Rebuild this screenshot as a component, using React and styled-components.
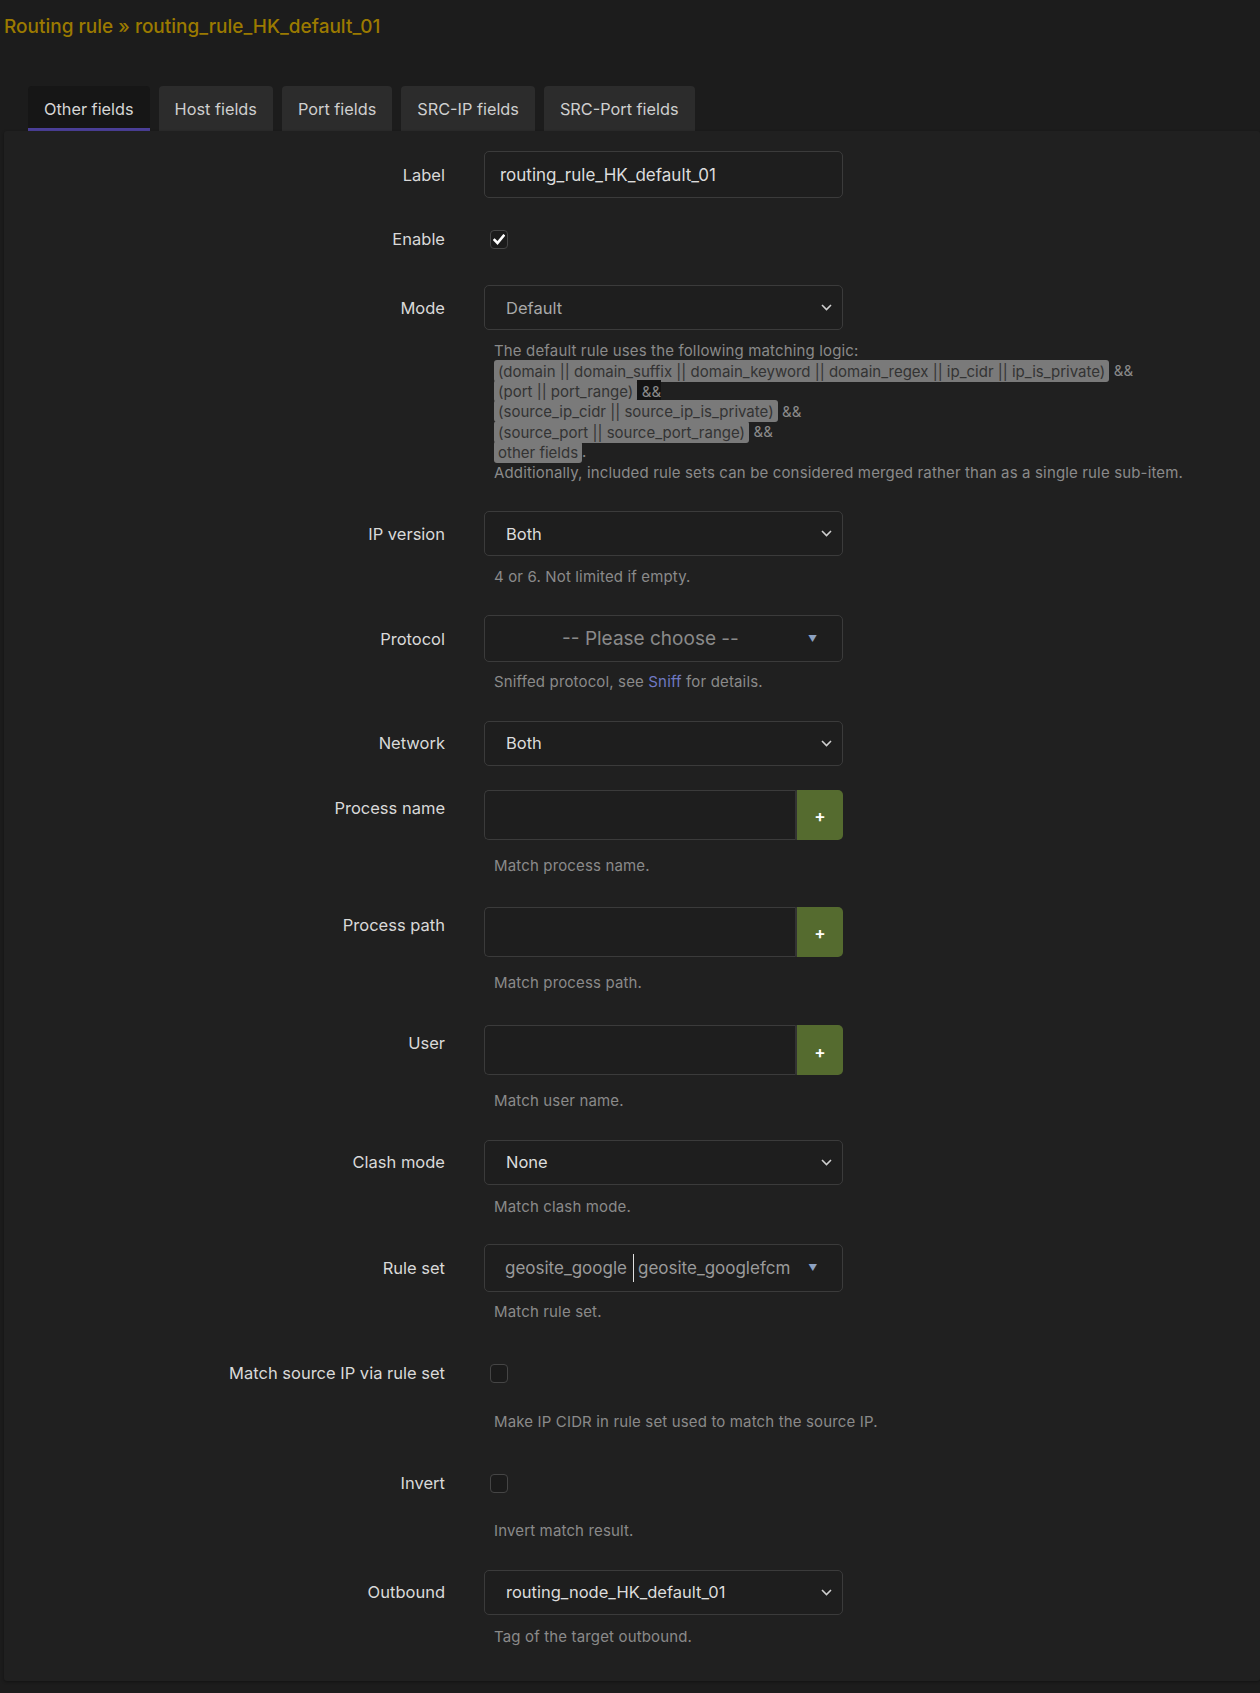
import React from "react";
import styled, { createGlobalStyle } from "styled-components";

const GlobalStyle = createGlobalStyle`
  html, body { margin: 0; padding: 0; background: #1c1c1c; }
  body { font-family: Inter, "Noto Sans", "Liberation Sans", sans-serif; color: #d8d8d8; }
  * { box-sizing: border-box; }
`;

const Page = styled.div`
  width: 1260px;
  min-height: 1693px;
  background: #1c1c1c;
  display: flex;
  flex-direction: column;
`;

const Title = styled.h2`
  margin: 0;
  padding: 15px 0 0 4px;
  height: 86px;
  font-size: 19px;
  line-height: 24px;
  font-weight: 500;
  color: #9b7a00;
`;

const TabBar = styled.div`
  display: flex;
  gap: 9px;
  padding-left: 28px;
  height: 45px;
`;

const Tab = styled.div`
  height: 45px;
  padding: 3px 16px 0;
  display: flex;
  align-items: center;
  font-size: 16.3px;
  color: ${(p) => (p.$active ? "#d6d6d6" : "#cfcfcf")};
  background: ${(p) => (p.$active ? "#161616" : "#2c2c2c")};
  border-radius: 4px 4px 0 0;
  border-bottom: 3px solid ${(p) => (p.$active ? "#4b3f98" : "transparent")};
`;

const Panel = styled.div`
  margin-left: 4px;
  background: #202020;
  border-radius: 3px;
  box-shadow: 0 1px 3px rgba(0, 0, 0, 0.35);
  padding: 20px 0 34px 0;
  display: flex;
  flex-direction: column;
`;

const Row = styled.div`
  display: grid;
  grid-template-columns: 441px 1fr;
  column-gap: 39px;
  align-items: start;
  margin-top: ${(p) => p.$gap || 0}px;
`;

const Label = styled.div`
  height: ${(p) => p.$h}px;
  display: flex;
  align-items: center;
  justify-content: flex-end;
  font-size: 16.5px;
  color: #d9d9d9;
`;

const Field = styled.div`
  display: flex;
  flex-direction: column;
  align-items: flex-start;
`;

const TextInput = styled.div`
  width: 359px;
  height: ${(p) => p.$h}px;
  border: 1px solid #3b3b3b;
  border-radius: 5px;
  background: #1e1e1e;
  padding: 0 15px;
  display: flex;
  align-items: center;
  font-size: 17px;
  color: #dcdcdc;
`;

const SelectBox = styled.div`
  width: 359px;
  height: ${(p) => p.$h}px;
  border: 1px solid #3b3b3b;
  border-radius: 5px;
  background: #1e1e1e;
  padding: 0 10px 0 21px;
  display: flex;
  align-items: center;
  justify-content: space-between;
  font-size: 16.5px;
  color: ${(p) => (p.$muted ? "#a8a8a8" : "#dcdcdc")};
`;

const Dropdown = styled.div`
  width: 359px;
  height: ${(p) => p.$h}px;
  border: 1px solid #3b3b3b;
  border-radius: 5px;
  background: #1e1e1e;
  padding: 0 25px 0 20px;
  display: flex;
  align-items: center;
  gap: 12px;
`;

const Placeholder = styled.span`
  flex: 1;
  text-align: center;
  font-size: 19px;
  color: #8a8a8a;
`;

const ChipList = styled.div`
  flex: 1;
  display: flex;
  align-items: center;
  font-size: 17px;
  color: #9a9a9a;
`;

const Chip = styled.span`
  padding-right: 6px;
  & + & {
    border-left: 1.5px solid #e0e0e0;
    padding-left: 4px;
    line-height: 28px;
  }
`;

const Caret = styled.span`
  color: #8da2c2;
  font-size: 9px;
`;

const Group = styled.div`
  width: 359px;
  height: ${(p) => p.$h}px;
  display: flex;
`;

const GroupInput = styled.div`
  flex: 1;
  border: 1px solid #3b3b3b;
  border-right: none;
  border-radius: 5px 0 0 5px;
  background: #1e1e1e;
`;

const AddButton = styled.div`
  width: 48px;
  background: #556b2f;
  border-left: 2px solid #333;
  border-radius: 0 5px 5px 0;
  display: flex;
  align-items: center;
  justify-content: center;
  color: #fff;
  font-size: 17px;
  font-weight: 600;
  padding-top: 3px;
`;

const CheckWrap = styled.div`
  height: ${(p) => p.$h}px;
  display: flex;
  align-items: center;
  padding-left: 6px;
`;

const Checkbox = styled.div`
  width: 18px;
  height: 19px;
  border: 1px solid #454545;
  border-radius: 4px;
  background: #1b1b1b;
  display: flex;
  align-items: center;
  justify-content: center;
`;

const Desc = styled.div`
  margin-top: ${(p) => p.$mt}px;
  padding-left: 10px;
  font-size: 15px;
  line-height: 20.3px;
  color: #8a8a8a;
  letter-spacing: 0.15px;
`;

const Hl = styled.span`
  background: #7a7a7a;
  color: #333333;
  border-radius: 3px;
  padding: 1.5px 4px;
  letter-spacing: 0;
`;

const Dark = styled.span`
  background: #141414;
  padding: 1.5px 0;
`;

const Link = styled.span`
  color: #6f79c4;
`;

const Chevron = () => (
  <svg width="11" height="7" viewBox="0 0 11 7">
    <path d="M1 1 L5.5 5.5 L10 1" fill="none" stroke="#d0d0d0" strokeWidth="1.6" />
  </svg>
);

const Check = () => (
  <svg width="12" height="11" viewBox="0 0 12 11">
    <path d="M1.5 6 L4.5 9 L10.5 1.8" fill="none" stroke="#ffffff" strokeWidth="2.6" strokeLinecap="square" />
  </svg>
);

const SelectRow = ({ label, value, muted, gap, h = 45, children }) => (
  <Row $gap={gap}>
    <Label $h={h}>{label}</Label>
    <Field>
      <SelectBox $h={h} $muted={muted}>
        <span>{value}</span>
        <Chevron />
      </SelectBox>
      {children}
    </Field>
  </Row>
);

const GroupRow = ({ label, desc, gap }) => (
  <Row $gap={gap}>
    <Label $h={36}>{label}</Label>
    <Field>
      <Group $h={50}>
        <GroupInput />
        <AddButton>+</AddButton>
      </Group>
      <Desc $mt={16}>{desc}</Desc>
    </Field>
  </Row>
);

const CheckRow = ({ label, checked, desc, gap, descMt }) => (
  <Row $gap={gap}>
    <Label $h={46}>{label}</Label>
    <Field>
      <CheckWrap $h={46}>
        <Checkbox>{checked && <Check />}</Checkbox>
      </CheckWrap>
      {desc && <Desc $mt={descMt}>{desc}</Desc>}
    </Field>
  </Row>
);

export default function App() {
  return (
    <Page>
      <GlobalStyle />
      <Title>Routing rule » routing_rule_HK_default_01</Title>
      <TabBar>
        <Tab $active>Other fields</Tab>
        <Tab>Host fields</Tab>
        <Tab>Port fields</Tab>
        <Tab>SRC-IP fields</Tab>
        <Tab>SRC-Port fields</Tab>
      </TabBar>
      <Panel>
        <Row>
          <Label $h={47}>Label</Label>
          <Field>
            <TextInput $h={47}>routing_rule_HK_default_01</TextInput>
          </Field>
        </Row>

        <CheckRow label="Enable" checked gap={18} />

        <SelectRow label="Mode" value="Default" muted gap={23}>
          <Desc $mt={11}>
            The default rule uses the following matching logic:
            <br />
            <Hl>(domain || domain_suffix || domain_keyword || domain_regex || ip_cidr || ip_is_private)</Hl> &amp;&amp;
            <br />
            <Hl>(port || port_range)</Hl>
            <Dark> &amp;&amp;</Dark>
            <br />
            <Hl>(source_ip_cidr || source_ip_is_private)</Hl> &amp;&amp;
            <br />
            <Hl>(source_port || source_port_range)</Hl> &amp;&amp;
            <br />
            <Hl>other fields</Hl>.
            <br />
            Additionally, included rule sets can be considered merged rather than as a single rule sub-item.
          </Desc>
        </SelectRow>

        <SelectRow label="IP version" value="Both" gap={28}>
          <Desc $mt={11}>4 or 6. Not limited if empty.</Desc>
        </SelectRow>

        <Row $gap={28}>
          <Label $h={47}>Protocol</Label>
          <Field>
            <Dropdown $h={47}>
              <Placeholder>-- Please choose --</Placeholder>
              <Caret>▼</Caret>
            </Dropdown>
            <Desc $mt={10}>
              Sniffed protocol, see <Link>Sniff</Link> for details.
            </Desc>
          </Field>
        </Row>

        <SelectRow label="Network" value="Both" gap={28} />

        <GroupRow label="Process name" desc="Match process name." gap={24} />
        <GroupRow label="Process path" desc="Match process path." gap={31} />
        <GroupRow label="User" desc="Match user name." gap={32} />

        <SelectRow label="Clash mode" value="None" gap={28}>
          <Desc $mt={12}>Match clash mode.</Desc>
        </SelectRow>

        <Row $gap={27}>
          <Label $h={48}>Rule set</Label>
          <Field>
            <Dropdown $h={48}>
              <ChipList>
                <Chip>geosite_google</Chip>
                <Chip>geosite_googlefcm</Chip>
              </ChipList>
              <Caret>▼</Caret>
            </Dropdown>
            <Desc $mt={10}>Match rule set.</Desc>
          </Field>
        </Row>

        <CheckRow
          label="Match source IP via rule set"
          desc="Make IP CIDR in rule set used to match the source IP."
          gap={28}
          descMt={16}
        />
        <CheckRow label="Invert" desc="Invert match result." gap={28} descMt={15} />

        <SelectRow label="Outbound" value="routing_node_HK_default_01" gap={28}>
          <Desc $mt={12}>Tag of the target outbound.</Desc>
        </SelectRow>
      </Panel>
    </Page>
  );
}
